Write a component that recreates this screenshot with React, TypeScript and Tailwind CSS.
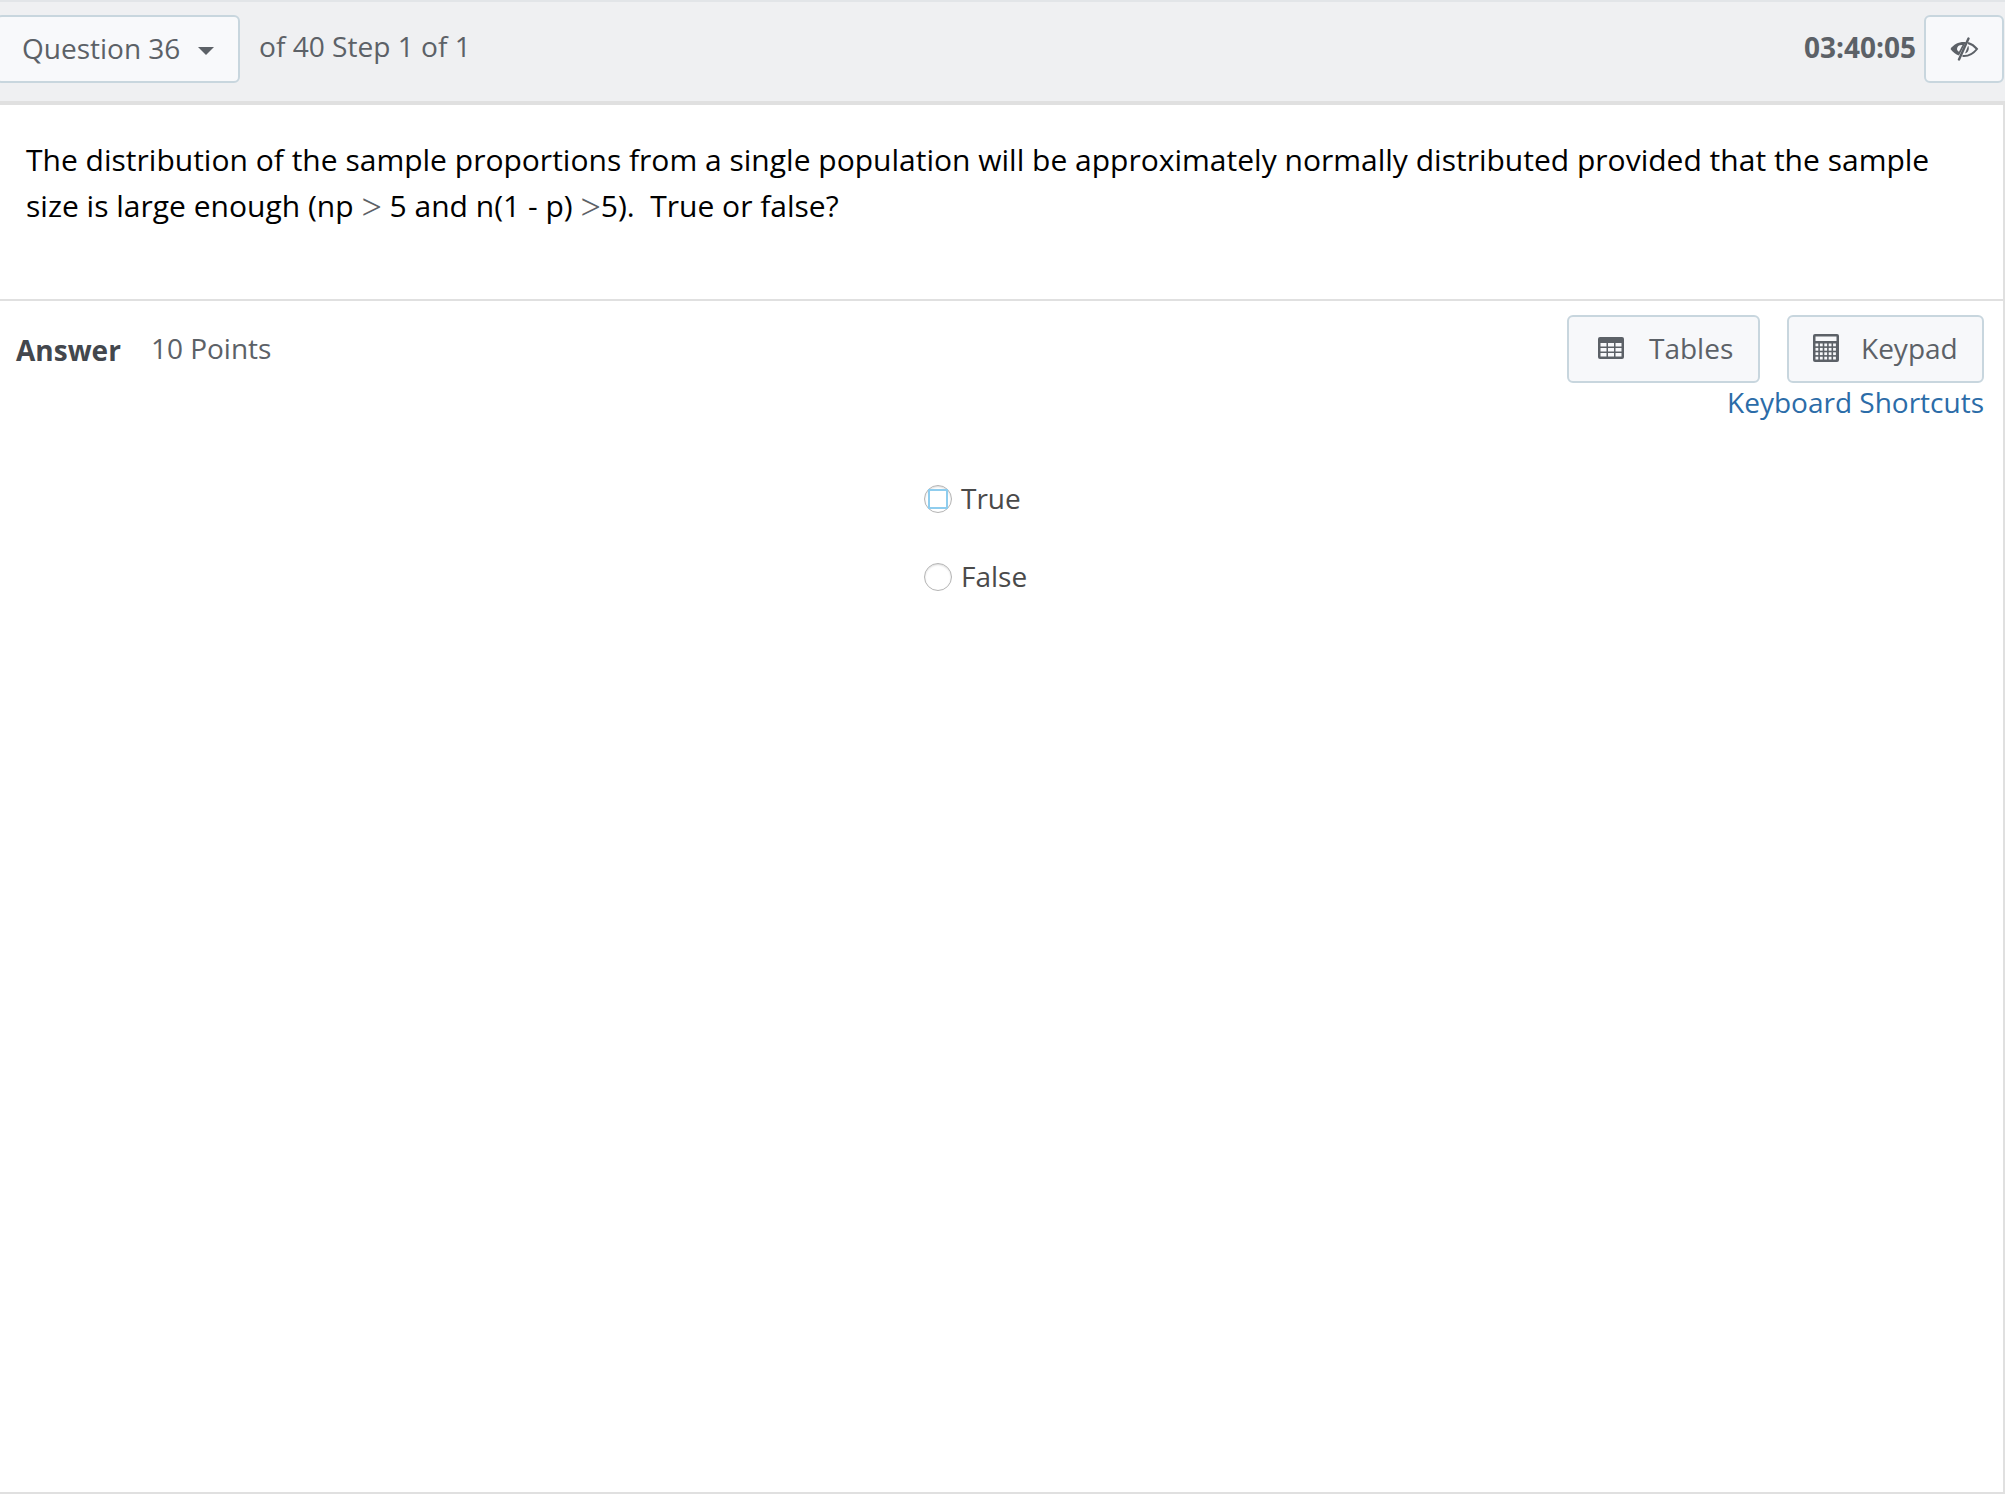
function EyeOff() {
  return (
    <svg width="30" height="24" viewBox="0 0 30 24" fill="none" className="text-[#5c6167]">
      {/* right half outline */}
      <path d="M19 6 C22.500 7 25.500 9 28 12 C24.500 16.500 20 19 15 19 L13.500 19" stroke="currentColor" strokeWidth="2" />
      <path d="M19.500 9.500 C20.500 12.500 19 15.500 16 16.500 L19 9" fill="currentColor" />
      {/* left half filled, with a lighter pupil */}
      <path d="M1.500 12 C5 6.500 10 4.500 17 5 L10 18.500 C6.500 17.500 4 15 1.500 12 Z" fill="currentColor" />
      <path d="M8 12 C8 9.500 10 7.800 13.500 8 L10 14.800 C8.800 14.200 8 13.200 8 12 Z" fill="#f8f9fb" />
      <path d="M19.500 1.500 L10 22.500" stroke="currentColor" strokeWidth="2.400" strokeLinecap="round" />
    </svg>
  )
}

function TableIcon() {
  return (
    <svg width="26" height="22" viewBox="0 0 26 22" className="text-[#5c6167]">
      <rect x="0" y="0" width="26" height="22" rx="2" fill="currentColor" />
      <g fill="#f8f9fb">
        <rect x="2.500" y="6" width="6" height="3.500" />
        <rect x="10" y="6" width="6" height="3.500" />
        <rect x="17.500" y="6" width="6" height="3.500" />
        <rect x="2.500" y="11" width="6" height="3.500" />
        <rect x="10" y="11" width="6" height="3.500" />
        <rect x="17.500" y="11" width="6" height="3.500" />
        <rect x="2.500" y="16" width="6" height="3.500" />
        <rect x="10" y="16" width="6" height="3.500" />
        <rect x="17.500" y="16" width="6" height="3.500" />
      </g>
    </svg>
  )
}

function KeypadIcon() {
  const dots = []
  for (let r = 0; r < 4; r++) {
    for (let c = 0; c < 5; c++) {
      dots.push(<rect key={`${r}-${c}`} x={2.500 + c * 4.400} y={9.500 + r * 4.400} width="2.800" height="2.800" fill="#f8f9fb" />)
    }
  }
  return (
    <svg width="26" height="28" viewBox="0 0 26 28" className="text-[#5c6167]">
      <rect x="0" y="0" width="26" height="28" rx="2" fill="currentColor" />
      <rect x="2.500" y="2.500" width="21" height="4.500" fill="#f8f9fb" />
      {dots}
    </svg>
  )
}

function App() {
  return (
    <div className="flex h-[1494px] w-[2005px] flex-col overflow-hidden bg-white font-['Open_Sans',sans-serif]">
      {/* Top bar */}
      <header className="flex h-[105px] shrink-0 items-start justify-between border-t-2 border-b-4 border-t-[#e2e5e8] border-b-[#e0e0e0] bg-[#eff0f2] pr-[1px] pt-[13px] text-[#5c6167]">
        <div className="flex items-start">
          <div className="-ml-[4px] flex h-[68px] w-[244px] items-center rounded-[6px] border-2 border-[#c8d6de] bg-[#f8f9fb] pb-[2px] pl-[24px] text-[28px]">
            <span>Question 36</span>
            <span className="ml-[18px] mt-[6px] h-0 w-0 border-x-[8px] border-t-[8px] border-x-transparent border-t-[#5c6167]" />
          </div>
          <div className="ml-[19px] mt-[11px] text-[28.100px] leading-[40px]">of 40 Step 1 of 1</div>
        </div>
        <div className="flex items-start">
          <div className="mt-[12px] text-[28px] font-bold leading-[40px]">03:40:05</div>
          <div className="ml-[8px] flex h-[68px] w-[80px] items-center justify-center rounded-[6px] border-2 border-[#c8d6de] bg-[#f8f9fb]">
            <EyeOff />
          </div>
        </div>
      </header>

      <main className="flex-1 border-r-2 border-b-2 border-[#e0e0e0]">
        {/* Question */}
        <section className="h-[196px] border-b-2 border-[#e0e0e0] pl-[26px] pr-[40px] pt-[32px] text-[30.030px] leading-[46px] text-black">
          <p>The distribution of the sample proportions from a single population will be approximately normally distributed provided that the sample</p>
          <p>size is large enough (np <span className="inline-block translate-y-[2px] font-['Liberation_Serif',serif] text-[36px] leading-none text-[#5c6167]">&gt;</span> 5 and n(1 - p) <span className="inline-block translate-y-[2px] font-['Liberation_Serif',serif] text-[36px] leading-none text-[#5c6167]">&gt;</span>5).&nbsp; True or false?</p>
        </section>

        {/* Answer header */}
        <section className="flex items-start justify-between pl-[16px] pr-[19px] pt-[14px]">
          <div className="mt-[15px] flex items-baseline">
            <span className="text-[28px] font-bold leading-[40px] text-[#43474d]">Answer</span>
            <span className="ml-[30px] -translate-y-[2px] text-[28px] leading-[40px] text-[#5c6167]">10 Points</span>
          </div>
          <div className="flex flex-col items-end">
            <div className="flex gap-[27px]">
              <div className="flex h-[68px] w-[193px] items-center rounded-[6px] border-2 border-[#c8d6de] bg-[#f7f8fa] pb-[2px] pl-[29px] text-[28px] text-[#5c6167]">
                <TableIcon />
                <span className="ml-[25px]">Tables</span>
              </div>
              <div className="flex h-[68px] w-[197px] items-center rounded-[6px] border-2 border-[#c8d6de] bg-[#f7f8fa] pb-[2px] pl-[24px] text-[28px] text-[#5c6167]">
                <KeypadIcon />
                <span className="ml-[22px]">Keypad</span>
              </div>
            </div>
            <a href="#" className="-mt-[1px] text-[28px] leading-[40px] text-[#2b6ca8]">Keyboard Shortcuts</a>
          </div>
        </section>

        {/* Choices */}
        <section className="ml-[924px] mt-[63px] flex flex-col gap-[50px] text-[28px] leading-[28px] text-[#4a4a4a]">
          <label className="flex h-[28px] items-center gap-[9px]">
            <span className="flex h-[28px] w-[28px] items-center justify-center rounded-full border border-[#b5b5b5] shadow-[inset_0_1px_2px_rgba(0,0,0,0.15)]">
              <span className="h-[20px] w-[20px] border-2 border-[#8fcdee]" />
            </span>
            <span className="-translate-y-[1px]">True</span>
          </label>
          <label className="flex h-[28px] items-center gap-[9px]">
            <span className="h-[28px] w-[28px] rounded-full border border-[#b5b5b5] shadow-[inset_0_1px_2px_rgba(0,0,0,0.15)]" />
            <span className="-translate-y-[1px]">False</span>
          </label>
        </section>
      </main>
    </div>
  )
}

export default App
